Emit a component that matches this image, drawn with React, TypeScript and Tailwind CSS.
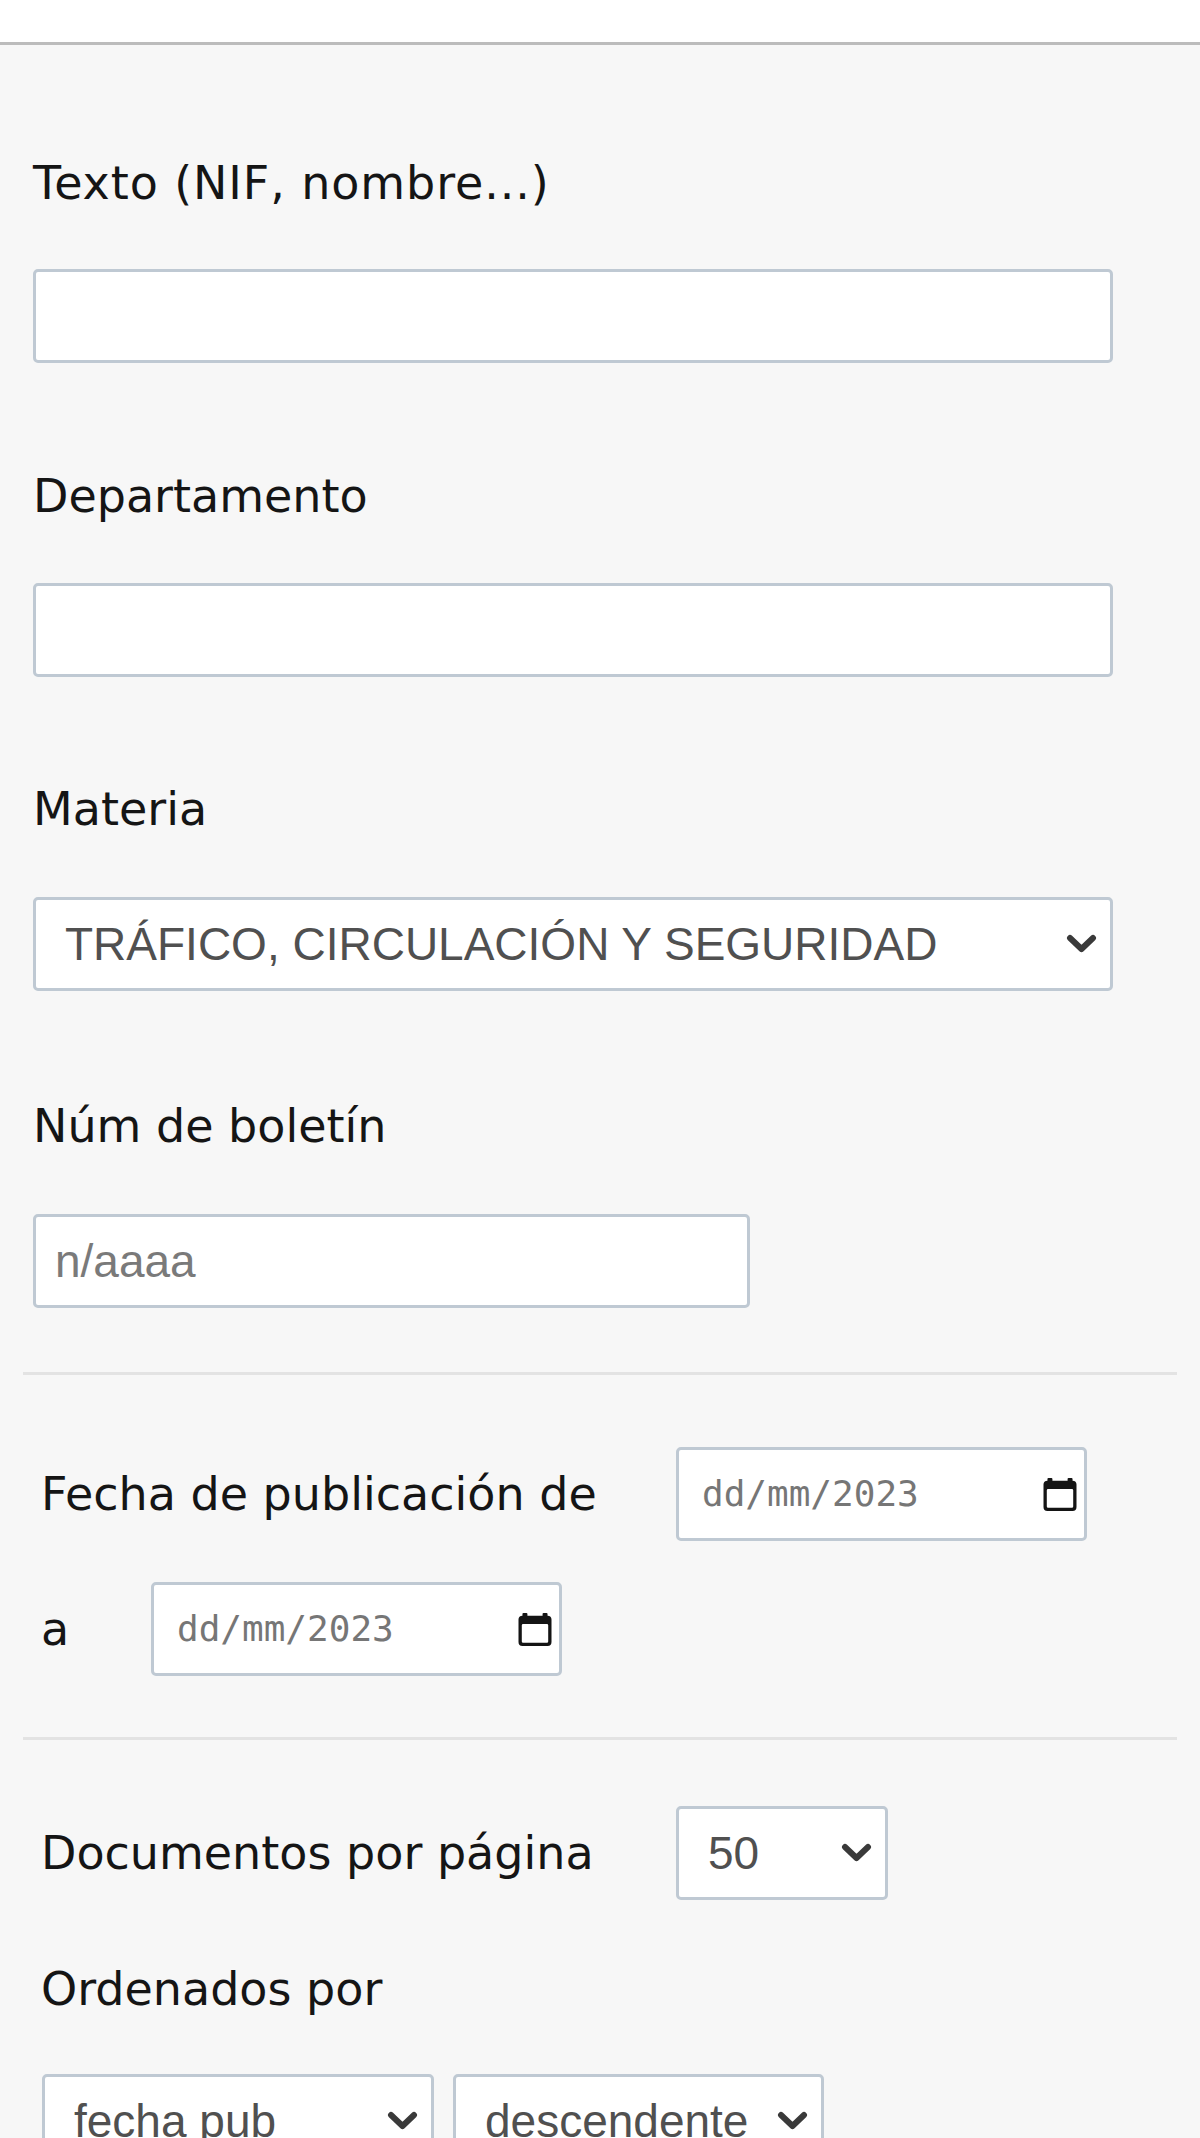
import React from "react";

const labelCls = "font-['DejaVu_Sans',sans-serif] text-[46px] leading-[54px] text-[#151515] whitespace-nowrap";
const boxCls = "border-[3px] border-[#bfc9d3] rounded-[5px] bg-white h-[94px] shrink-0";
const fieldText = "font-['Liberation_Sans',Arial,sans-serif] text-[46px] leading-none whitespace-nowrap";

function Chevron() {
  return (
    <svg width="31" height="20" viewBox="0 0 31 20" className="shrink-0">
      <polyline points="4,4 15.5,15 27,4" fill="none" stroke="#3a3a3a" strokeWidth="6" strokeLinecap="round" strokeLinejoin="round" />
    </svg>
  );
}

function CalendarIcon() {
  return (
    <svg width="34" height="33" viewBox="0 0 100 100" className="shrink-0">
      <rect x="12" y="0" width="15" height="14" rx="3" fill="#141414" />
      <rect x="73" y="0" width="15" height="14" rx="3" fill="#141414" />
      <path
        fillRule="evenodd"
        fill="#141414"
        d="M12 8 H88 A12 12 0 0 1 100 20 V88 A12 12 0 0 1 88 100 H12 A12 12 0 0 1 0 88 V20 A12 12 0 0 1 12 8 Z M14 33 H86 A4 4 0 0 1 90 37 V86 A4 4 0 0 1 86 90 H14 A4 4 0 0 1 10 86 V37 A4 4 0 0 1 14 33 Z"
      />
    </svg>
  );
}

function SelectBox({ value, width }: { value: string; width: string }) {
  return (
    <div className={`${boxCls} ${width} flex items-center justify-between pl-[29px] pr-[13px]`}>
      <span className={`${fieldText} text-[#505050]`}>{value}</span>
      <Chevron />
    </div>
  );
}

function DateBox() {
  return (
    <div className={`${boxCls} w-[411px] flex items-center justify-between pl-[23px] pr-[7px]`}>
      <span className="font-['DejaVu_Sans_Mono',monospace] text-[36px] leading-none text-[#767676] whitespace-nowrap">
        dd/mm/2023
      </span>
      <CalendarIcon />
    </div>
  );
}

export default function App() {
  return (
    <div className="w-full h-[2138px] overflow-hidden bg-[#f7f7f7] flex flex-col">
      <div className="h-[42px] bg-white shrink-0" />
      <div className="h-[3px] bg-[#bcbcbc] shrink-0" />

      <div className="flex flex-col pl-[33px]">
        <label className={`${labelCls} mt-[111px] tracking-[0.9px]`}>Texto (NIF, nombre...)</label>
        <input type="text" className={`${boxCls} w-[1080px] mt-[59px] outline-none px-[20px]`} />

        <label className={`${labelCls} mt-[106px]`}>Departamento</label>
        <input type="text" className={`${boxCls} w-[1080px] mt-[60px] outline-none px-[20px]`} />

        <label className={`${labelCls} mt-[105px]`}>Materia</label>
        <div className="mt-[61px]">
          <SelectBox value="TRÁFICO, CIRCULACIÓN Y SEGURIDAD" width="w-[1080px]" />
        </div>

        <label className={`${labelCls} mt-[108px]`}>Núm de boletín</label>
        <div className={`${boxCls} w-[717px] mt-[61px] flex items-center pl-[19px]`}>
          <span className={`${fieldText} text-[#7a7a7a]`}>n/aaaa</span>
        </div>
      </div>

      <div className="mt-[64px] mx-[23px] h-[3px] bg-[#e3e3e3] shrink-0" />

      <div className="flex flex-col pl-[41px]">
        <div className="flex items-center mt-[72px]">
          <span className={`${labelCls} w-[635px] shrink-0`}>Fecha de publicación de</span>
          <DateBox />
        </div>
        <div className="flex items-center mt-[41px]">
          <span className={`${labelCls} w-[110px] shrink-0`}>a</span>
          <DateBox />
        </div>
      </div>

      <div className="mt-[61px] mx-[23px] h-[3px] bg-[#e3e3e3] shrink-0" />

      <div className="flex flex-col pl-[41px]">
        <div className="flex items-center mt-[66px]">
          <span className={`${labelCls} w-[635px] shrink-0`}>Documentos por página</span>
          <SelectBox value="50" width="w-[212px]" />
        </div>
        <span className={`${labelCls} mt-[62px]`}>Ordenados por</span>
        <div className="flex gap-[19px] mt-[58px] pl-[1px]">
          <SelectBox value="fecha pub" width="w-[392px]" />
          <SelectBox value="descendente" width="w-[371px]" />
        </div>
      </div>
    </div>
  );
}
